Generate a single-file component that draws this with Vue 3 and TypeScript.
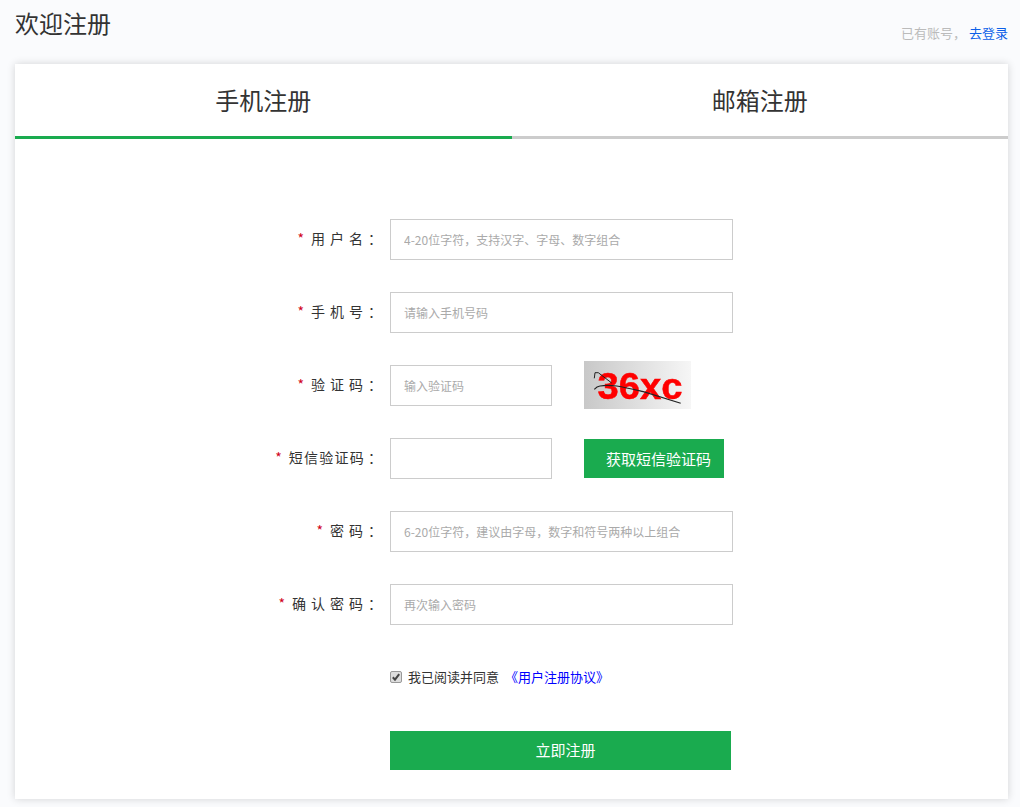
<script setup lang="ts">
interface Row {
  label: string
  kind: 'wide' | 'captcha' | 'sms'
  placeholder: string
  tight: boolean
}
const rows: Row[] = [
  { label: '用户名', kind: 'wide', placeholder: '4-20位字符，支持汉字、字母、数字组合', tight: false },
  { label: '手机号', kind: 'wide', placeholder: '请输入手机号码', tight: false },
  { label: '验证码', kind: 'captcha', placeholder: '输入验证码', tight: false },
  { label: '短信验证码', kind: 'sms', placeholder: '', tight: true },
  { label: '密码', kind: 'wide', placeholder: '6-20位字符，建议由字母，数字和符号两种以上组合', tight: false },
  { label: '确认密码', kind: 'wide', placeholder: '再次输入密码', tight: false },
]
</script>

<template>
  <div class="page">
    <header class="head">
      <h1 class="title">欢迎注册</h1>
      <div class="login">已有账号， <a class="login-link">去登录</a></div>
    </header>
    <main class="card">
      <div class="tabs">
        <div class="tab active">手机注册</div>
        <div class="tab">邮箱注册</div>
      </div>
      <form class="form" @submit.prevent>
        <div v-for="r in rows" :key="r.label" class="row">
          <label class="label"><i class="star">*</i><span class="name" :class="{ tight: r.tight }">{{ r.label }}</span><span class="colon">：</span></label>
          <input
            class="input"
            :class="{ short: r.kind !== 'wide' }"
            type="text"
            :placeholder="r.placeholder"
          />
          <div v-if="r.kind === 'captcha'" class="captcha">
            <span class="captcha-text">36xc</span>
            <svg class="captcha-lines" viewBox="0 0 107 48" fill="none" stroke="#222">
              <path d="M10.300 17.300 L11 11.700 L14.300 11.700 L27.700 22" stroke-width="1" />
              <path d="M10.300 28.300 C12 26.500 14 25.300 16 25 C22 24 27 24.300 32.700 25 C42 26.500 50 28.500 59.300 30.700 L96.700 42.300" stroke-width="1.200" />
            </svg>
          </div>
          <button v-if="r.kind === 'sms'" type="button" class="sms">获取短信验证码</button>
        </div>
        <div class="agree">
          <span class="check-wrap">
            <input class="check" type="checkbox" checked />
            <svg class="tick" viewBox="0 0 12 12" fill="none" stroke="#444" stroke-width="2">
              <path d="M2.800 6.200 L5 8.600 L9.200 3.200" />
            </svg>
          </span>
          <span class="agree-text">我已阅读并同意</span>
          <a class="agree-link">《用户注册协议》</a>
        </div>
        <button type="submit" class="submit">立即注册</button>
      </form>
    </main>
  </div>
</template>

<style>
html, body { margin: 0; background: #fafbfd; }
</style>

<style scoped>
.page {
  height: 807px;
  box-sizing: border-box;
  padding: 0 12px 0 15px;
  background: #fafbfd;
  font-family: "Noto Sans CJK SC", "Liberation Sans", sans-serif;
  color: #333;
  overflow: hidden;
}
.head {
  height: 64px;
  display: flex;
  justify-content: space-between;
}
.title {
  margin: 6px 0 0;
  font-size: 24px;
  font-weight: 400;
  line-height: 34px;
  color: #333;
}
.login {
  margin-top: 23px;
  font-size: 13px;
  line-height: 20px;
  color: #bbb;
}
.login-link { color: #0b5fe8; }
.card {
  height: 735px;
  background: #fff;
  box-shadow: 0 0 8px rgba(0, 0, 0, .16);
}
.tabs { display: flex; }
.tab {
  flex: 1;
  height: 72px;
  line-height: 71px;
  text-align: center;
  font-size: 24px;
  color: #333;
  border-bottom: 3px solid #ccc;
}
.tab.active { border-bottom-color: #1aab4f; }
.form {
  padding: 80px 0 0 375px;
}
.row {
  position: relative;
  display: flex;
  align-items: center;
  height: 41px;
  margin-bottom: 32px;
}
.label {
  position: absolute;
  right: 100%;
  top: 9px;
  display: flex;
  white-space: nowrap;
  font-size: 14px;
  line-height: 20px;
  color: #333;
  margin-right: 8px;
}
.name { letter-spacing: 5px; }
.name.tight { letter-spacing: 1.250px; margin-right: 3px; }
.star {
  font-style: normal;
  color: #d0021b;
  margin-right: 7px;
}
.input {
  width: 343px;
  height: 41px;
  box-sizing: border-box;
  padding: 0 13px;
  border: 1px solid #ccc;
  background: #fff;
  font-family: inherit;
  font-size: 12px;
  outline: none;
}
.input.short { width: 162px; }
.input::placeholder { color: #aaa; opacity: 1; }
.captcha {
  position: relative;
  width: 107px;
  height: 48px;
  margin: -2px 0 0 32px;
  background: linear-gradient(90deg, #c8c8c8, #f6f6f6);
  display: flex;
  align-items: center;
  justify-content: center;
  overflow: hidden;
}
.captcha-text {
  font-family: "Liberation Sans", sans-serif;
  font-weight: 700;
  font-size: 36px;
  line-height: 48px;
  color: #f00;
  margin: 5px 0 0 6px;
  transform: scaleX(1.060);
  -webkit-text-stroke: .5px #f00;
  filter: blur(.5px);
}
.captcha-lines {
  position: absolute;
  inset: 0;
  width: 107px;
  height: 48px;
}
.sms {
  width: 140px;
  height: 39px;
  margin-left: 32px;
  padding: 0 0 0 22px;
  border: 0;
  background: #1aab4f;
  color: #fff;
  font-family: inherit;
  font-size: 15px;
  text-align: left;
}
.agree {
  display: flex;
  align-items: center;
  height: 20px;
  margin-top: 42px;
  font-size: 13px;
  line-height: 20px;
}
.check-wrap {
  position: relative;
  width: 12px;
  height: 12px;
  margin-right: 6px;
}
.check {
  display: block;
  appearance: none;
  box-sizing: border-box;
  width: 12px;
  height: 12px;
  margin: 0;
  border: 1px solid #999;
  border-radius: 2px;
  background: #ddd;
}
.tick {
  position: absolute;
  inset: 0;
  width: 12px;
  height: 12px;
  pointer-events: none;
}
.agree-text { color: #333; }
.agree-link { color: #00f; margin-left: 6px; }
.submit {
  display: block;
  width: 341px;
  height: 39px;
  margin: 44px 0 0;
  padding: 0 0 2px 10px;
  border: 0;
  background: #1aab4f;
  color: #fff;
  font-family: inherit;
  font-size: 15px;
}
</style>
